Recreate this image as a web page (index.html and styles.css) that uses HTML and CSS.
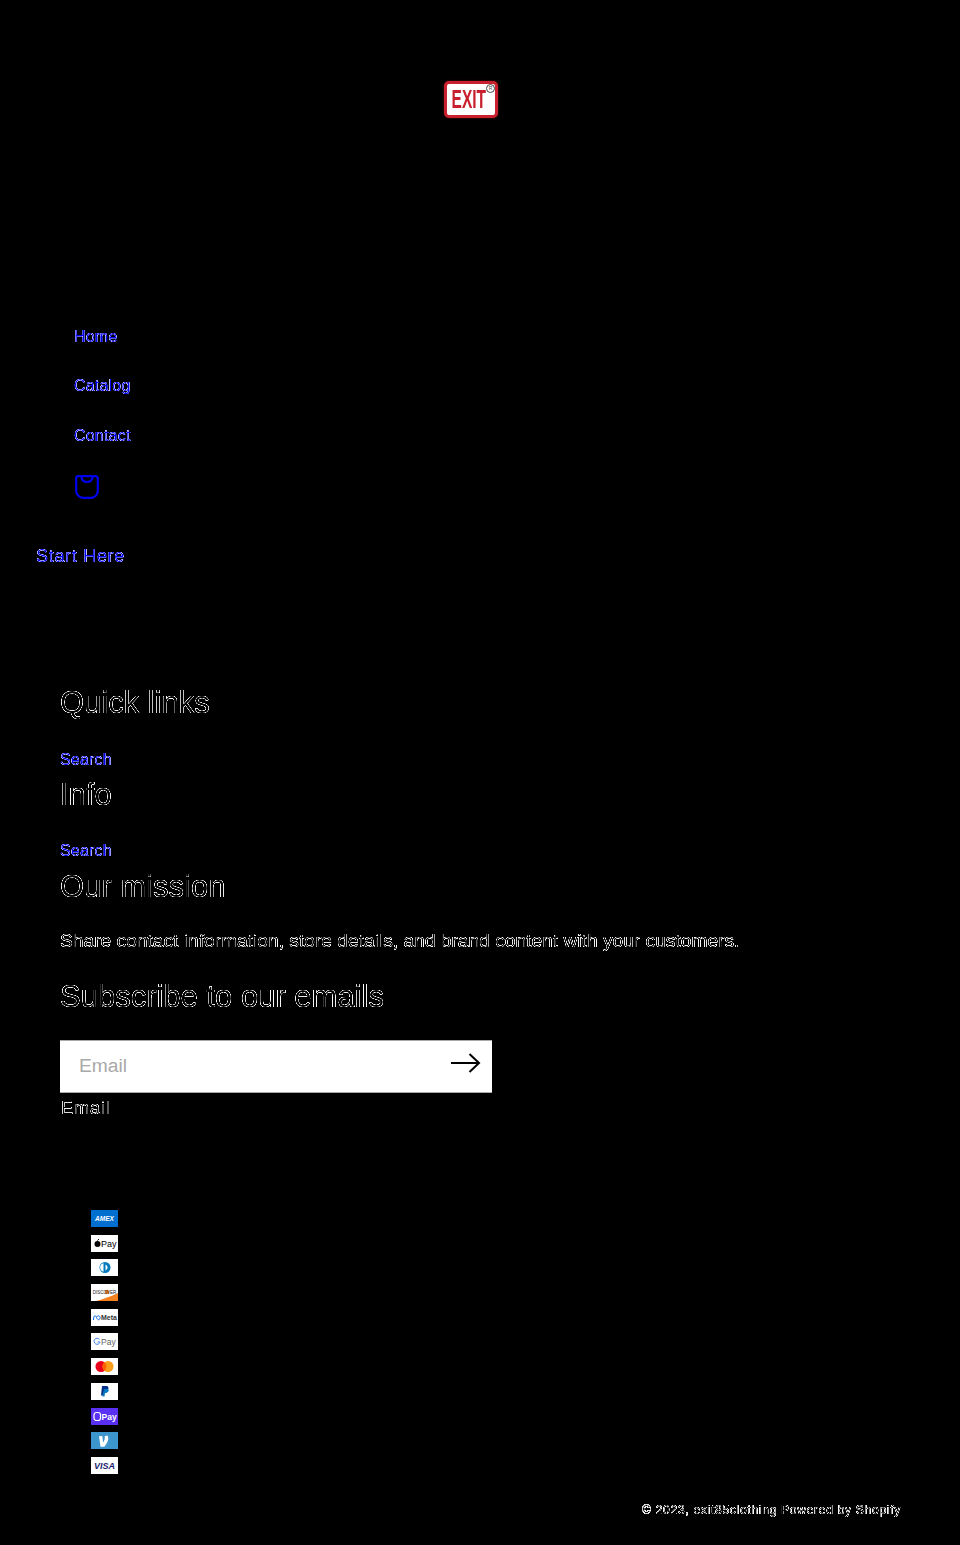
FILE: index.html
```html
<!DOCTYPE html>
<html lang="en">
<head>
<meta charset="utf-8">
<title>exit85clothing</title>
<link rel="stylesheet" href="styles.css">
</head>
<body>
<svg class="defs" width="0" height="0" aria-hidden="true">
  <filter id="edge" color-interpolation-filters="sRGB" x="0" y="0" width="100%" height="100%">
    <feComponentTransfer>
      <feFuncR type="table" tableValues="0 .9 1 .5 0"/>
      <feFuncG type="table" tableValues="0 .9 1 .5 0"/>
      <feFuncB type="table" tableValues="0 .9 1 .5 0"/>
    </feComponentTransfer>
  </filter>
  <filter id="edge-blue" color-interpolation-filters="sRGB" x="0" y="0" width="100%" height="100%">
    <feComponentTransfer>
      <feFuncR type="table" tableValues="0 .25 .8 .45 0"/>
      <feFuncG type="table" tableValues="0 .25 .8 .45 0"/>
      <feFuncB type="table" tableValues="0 .8 1 1 .93"/>
    </feComponentTransfer>
  </filter>
</svg>
<header class="header">
  <a class="logo" href="#">
    <span class="logo-word">EXIT</span>
    <span class="logo-reg">R</span>
  </a>
</header>
<nav class="nav">
  <ul class="menu">
    <li><a class="link" href="#">Home</a></li>
    <li><a class="link" href="#">Catalog</a></li>
    <li><a class="link" href="#">Contact</a></li>
    <li class="cart-row">
      <a class="cart" href="#" aria-label="Cart">
        <svg width="24" height="24" viewBox="0 0 24 24" fill="none" stroke="#0000ee" stroke-width="2.200">
          <path d="M3.500 1.200h17a2.300 2.300 0 0 1 2.300 2.300V16a6.800 6.800 0 0 1-6.800 6.800H8A6.800 6.800 0 0 1 1.200 16V3.500a2.300 2.300 0 0 1 2.300-2.300z"/>
          <path d="M6.500 1.500c0 3.800 2.500 5.500 5.500 5.500s5.500-1.700 5.500-5.500"/>
        </svg>
      </a>
    </li>
  </ul>
  <a class="link start" href="#">Start Here</a>
</nav>
<footer class="footer">
  <h2 class="heading">Quick links</h2>
  <a class="link small" href="#">Search</a>
  <h2 class="heading heading-info">Info</h2>
  <a class="link small small-b" href="#">Search</a>
  <h2 class="heading heading-mission">Our mission</h2>
  <p class="copy">Share contact information, store details, and brand content with your customers.</p>
  <h2 class="heading heading-sub">Subscribe to our emails</h2>
  <form class="signup">
    <input class="signup-input" type="email" placeholder="Email" aria-label="Email">
    <button class="signup-btn" type="button" aria-label="Subscribe">
      <svg width="30" height="20" viewBox="0 0 30 20" fill="none" stroke="#000" stroke-width="2">
        <path d="M0 10h28M18.500 1l9.500 9-9.500 9"/>
      </svg>
    </button>
  </form>
  <div class="email-label">Email</div>
  <ul class="pay">
    <li><svg class="pay-icon" viewBox="0 0 27 17"><rect width="27" height="17" fill="#016fd0"/><text x="13.500" y="11" class="t-amex">AMEX</text></svg></li>
    <li><svg class="pay-icon" viewBox="0 0 27 17"><rect width="27" height="17" fill="#fff"/><circle cx="6.500" cy="9" r="3" fill="#000"/><path d="M6.500 5.500l1.500-1.500" stroke="#000"/><text x="10" y="12" class="t-apple">Pay</text></svg></li>
    <li><svg class="pay-icon" viewBox="0 0 27 17"><rect width="27" height="17" fill="#fff"/><circle cx="14" cy="8.500" r="5.500" fill="#0079be"/><path d="M12.500 4.300a4.300 4.300 0 0 0 0 8.400z" fill="#fff"/><path d="M14.500 5.500a3.200 3.200 0 0 1 0 6z" fill="#fff"/></svg></li>
    <li><svg class="pay-icon" viewBox="0 0 27 17"><rect width="27" height="17" fill="#fff"/><path d="M27 9C20 12.500 12 15 5 17h22z" fill="#f48120"/><circle cx="16" cy="8" r="2.200" fill="#f48120"/><text x="13.500" y="9.500" class="t-disc">DISCOVER</text></svg></li>
    <li><svg class="pay-icon" viewBox="0 0 27 17"><rect width="27" height="17" fill="#fff"/><path d="M2.500 11c0-5 2-5 3-2.500S8 11.500 9 9.500 7 5.500 5.500 8" fill="none" stroke="#0668e1" stroke-width="1"/><text x="10" y="11" class="t-meta">Meta</text></svg></li>
    <li><svg class="pay-icon" viewBox="0 0 27 17"><rect width="27" height="17" fill="#fff"/><path d="M8.500 6.500A3 3 0 1 0 9 9H6.500" fill="none" stroke="#4285f4" stroke-width="1"/><text x="10" y="12" class="t-gpay">Pay</text></svg></li>
    <li><svg class="pay-icon" viewBox="0 0 27 17"><rect width="27" height="17" fill="#fff"/><circle cx="10" cy="8.500" r="5.500" fill="#eb001b"/><circle cx="17" cy="8.500" r="5.500" fill="#f79e1b"/><path d="M13.500 4.300a5.500 5.500 0 0 1 0 8.400a5.500 5.500 0 0 1 0-8.400z" fill="#ff5f00"/></svg></li>
    <li><svg class="pay-icon" viewBox="0 0 27 17"><rect width="27" height="17" fill="#fff"/><path d="M11 3h4c2.500 0 3 2 2 3.500S14.500 8.500 13 8.500l-.7 4H10z" fill="#003087"/><path d="M13 6h3.500c1.500 0 1.500 1.500.8 2.500S15 10 14 10l-.5 3.500h-2z" fill="#0079c1"/></svg></li>
    <li><svg class="pay-icon" viewBox="0 0 27 17"><rect width="27" height="17" fill="#5a31f4"/><rect x="3" y="4.500" width="6.500" height="8" rx="2.500" fill="none" stroke="#fff" stroke-width="1.200"/><text x="10.500" y="12" class="t-opay">Pay</text></svg></li>
    <li><svg class="pay-icon" viewBox="0 0 27 17"><rect width="27" height="17" fill="#3d95ce"/><path d="M16.500 3.500c.6 1 .8 2 .8 3.200 0 2.500-2.200 5.700-4 8H9.500L8 4.300l3.300-.3.800 6.500c.8-1.300 1.700-3.200 1.700-4.600 0-.8-.1-1.300-.3-1.700z" fill="#fff"/></svg></li>
    <li><svg class="pay-icon" viewBox="0 0 27 17"><rect width="27" height="17" fill="#fff"/><text x="13.500" y="12" class="t-visa">VISA</text></svg></li>
  </ul>
  <div class="legal"><span class="legal-text">© 2023, exit85clothing Powered by Shopify</span></div>
</footer>
</body>
</html>
```
FILE: styles.css
```css
* { box-sizing: border-box; }
html, body { margin: 0; padding: 0; }
body {
  background: #000;
  color: #fff;
  font-family: "Liberation Sans", Arial, sans-serif;
  height: 1545px;
  overflow: hidden;
}
.defs { display: block; height: 0; }
ul { list-style: none; margin: 0; padding: 0; }
a { text-decoration: none; }

.header { display: flex; padding: 81px 0 0 444px; height: 294px; }
.logo {
  position: relative;
  display: flex;
  align-items: center;
  justify-content: center;
  width: 54px;
  height: 37px;
  background: #fff;
  border: 3px solid #c8202d;
  border-radius: 5px;
  box-shadow: 0 0 2px #7a1018;
}
.logo-word {
  font-size: 25px;
  font-weight: 700;
  line-height: 1;
  color: #c8202d;
  transform: scaleX(.62);
  margin-right: 5px;
}
.logo-reg {
  position: absolute;
  top: 0;
  right: 0;
  width: 9px;
  height: 9px;
  border: 1.500px solid #444;
  border-radius: 50%;
  font-size: 5px;
  line-height: 6px;
  text-align: center;
  color: #444;
}

.nav { padding-left: 36px; height: 392px; }
.menu { padding-left: 38px; padding-top: 18px; }
.menu li { height: 49.500px; display: flex; align-items: center; }
.link {
  background: #000;
  color: #fff;
  font-size: 16px;
  letter-spacing: .2px;
  filter: url(#edge-blue);
}
.menu li.cart-row { height: 52px; }
.cart { display: block; height: 24px; margin-left: 1px; }
.start { display: inline-block; font-size: 18px; letter-spacing: .7px; margin-top: 33px; }

.footer { padding: 0 60px; }
.heading {
  margin: 0;
  background: #000;
  font-size: 31px;
  font-weight: 400;
  line-height: 34px;
  filter: url(#edge);
  width: max-content;
}
.small { display: block; width: max-content; font-size: 16px; margin-top: 31px; line-height: 18px; }
.small-b { margin-top: 30px; }
.heading-info { margin-top: 9px; }
.heading-mission { margin-top: 10px; }
.copy {
  margin: 25px 0 0;
  background: #000;
  font-size: 19.200px;
  line-height: 24px;
  filter: url(#edge);
  width: max-content;
}
.heading-sub { margin-top: 27px; }
.signup {
  position: relative;
  width: 432px;
  height: 53px;
  margin-top: 26px;
}
.signup-input {
  display: block;
  width: 100%;
  height: 100%;
  padding: 0 60px 2px 19px;
  border: 0;
  border-top: 1px solid #aaa;
  border-bottom: 1px solid #aaa;
  background: #fff;
  font: 19.200px "Liberation Sans", Arial, sans-serif;
  color: #000;
  outline: 0;
}
.signup-input::placeholder { color: #a9a9a9; opacity: 1; }
.signup-btn {
  position: absolute;
  right: 11px;
  top: 13px;
  width: 30px;
  height: 20px;
  padding: 0;
  border: 0;
  background: none;
}
.signup-btn svg { display: block; }
.email-label {
  margin: 5px 0 0 1px;
  background: #000;
  font-size: 18px;
  line-height: 20px;
  letter-spacing: 1px;
  filter: url(#edge);
  width: max-content;
}
.pay { padding: 92px 0 0 31px; display: flex; flex-direction: column; gap: 7.700px; }
.pay li { height: 17px; }
.pay-icon { display: block; width: 27px; height: 17px; }
.pay-icon text { font-family: "Liberation Sans", Arial, sans-serif; }
.t-amex { font-size: 6.500px; font-weight: 700; font-style: italic; fill: #fff; text-anchor: middle; }
.t-apple { font-size: 9px; fill: #000; }
.t-disc { font-size: 4.500px; fill: #222; text-anchor: middle; }
.t-meta { font-size: 7px; font-weight: 700; fill: #333; }
.t-gpay { font-size: 8.500px; fill: #5f6368; }
.t-opay { font-size: 8.500px; font-weight: 700; fill: #fff; }
.t-visa { font-size: 9px; font-weight: 700; font-style: italic; fill: #1a1f71; text-anchor: middle; }
.legal { margin: 28px -1px 0 0; text-align: right; font-size: 12px; line-height: 16px; letter-spacing: .73px; }
.legal-text { display: inline-block; background: #000; filter: url(#edge); }
```
